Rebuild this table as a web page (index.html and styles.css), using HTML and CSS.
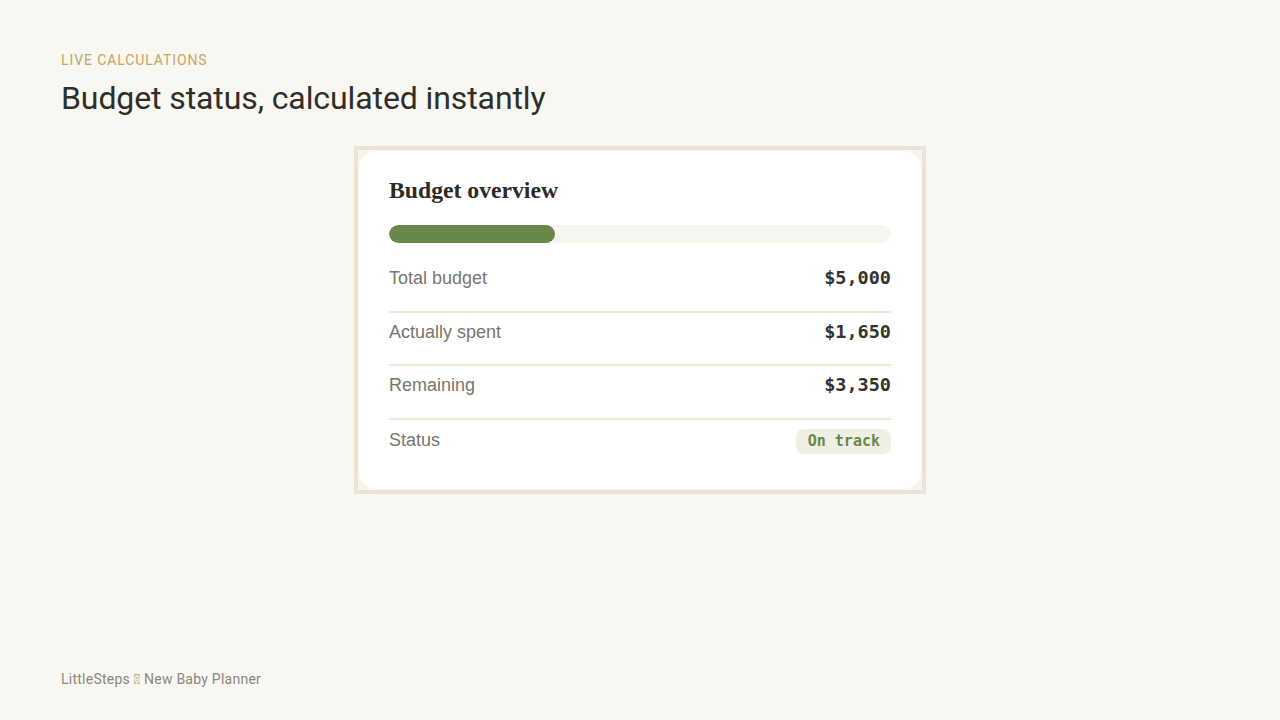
FILE: index.html
```html
<!DOCTYPE html>
<html lang="en">
<head>
<meta charset="utf-8">
<title>Budget status</title>
<link rel="stylesheet" href="styles.css">
</head>
<body>
<div class="page">
  <header class="head">
    <div class="eyebrow">LIVE CALCULATIONS</div>
    <h1 class="title">Budget status, calculated instantly</h1>
  </header>
  <main class="stage">
    <div class="frame">
      <section class="card">
        <h2 class="card-title">Budget overview</h2>
        <div class="track"><div class="fill" style="width:33%"></div></div>
        <div class="rows">
          <div class="row"><span class="label">Total budget</span><span class="value">$5,000</span></div>
          <div class="row"><span class="label">Actually spent</span><span class="value">$1,650</span></div>
          <div class="row"><span class="label">Remaining</span><span class="value">$3,350</span></div>
          <div class="row"><span class="label">Status</span><span class="badge">On track</span></div>
        </div>
      </section>
    </div>
  </main>
  <footer class="foot">LittleSteps &#xE000; New Baby Planner</footer>
</div>
</body>
</html>
```

FILE: styles.css
```css
html, body {
  margin: 0;
  padding: 0;
  background: #f9f7f1;
}
.page {
  height: 720px;
  box-sizing: border-box;
  padding: 52px 61px 33px;
  display: flex;
  flex-direction: column;
  font-family: Roboto, "Liberation Sans", sans-serif;
}
.eyebrow {
  font-size: 14px;
  line-height: 16px;
  letter-spacing: 0.9px;
  color: #c9a35f;
}
.title {
  margin: 11px 0 0;
  font-size: 32px;
  line-height: 38px;
  font-weight: 400;
  letter-spacing: -0.1px;
  color: #2f2e29;
}
.stage {
  display: flex;
  justify-content: center;
  margin-top: 29px;
}
.frame {
  width: 572px;
  box-sizing: border-box;
  border: 4px solid #ebe4d0;
  padding: 1px;
  background: #f7f4ec;
}
.card {
  background: #ffffff;
  border-radius: 18px;
  padding: 25px 30px 13px;
}
.card-title {
  margin: 0 0 21px;
  font-family: "Liberation Serif", serif;
  font-weight: 700;
  font-size: 23.7px;
  line-height: 28px;
  color: #2d2b26;
}
.track {
  height: 18px;
  border-radius: 9px;
  background: #f7f5ef;
  overflow: hidden;
}
.fill {
  height: 100%;
  border-radius: 9px;
  background: #6a874a;
}
.rows {
  margin-top: 16px;
}
.row {
  display: flex;
  justify-content: space-between;
  align-items: baseline;
  padding: 9px 0 22.5px;
  border-bottom: 2px solid #efe8d8;
}
.row:last-child {
  border-bottom: none;
}
.label {
  font-family: "Liberation Sans", Arial, sans-serif;
  font-size: 18px;
  line-height: 20px;
  color: #77766e;
}
.value {
  font-family: "DejaVu Sans Mono", monospace;
  font-weight: 700;
  font-size: 18.5px;
  line-height: 20px;
  color: #33322d;
}
.badge {
  font-family: "DejaVu Sans Mono", monospace;
  font-weight: 700;
  font-size: 15px;
  line-height: 17px;
  padding: 4px 11px 4px 12px;
  border-radius: 8px;
  background: #eef0e5;
  color: #6b8748;
}
.foot {
  margin-top: auto;
  font-size: 14px;
  line-height: 16px;
  letter-spacing: 0.25px;
  color: #8b887e;
}
```
